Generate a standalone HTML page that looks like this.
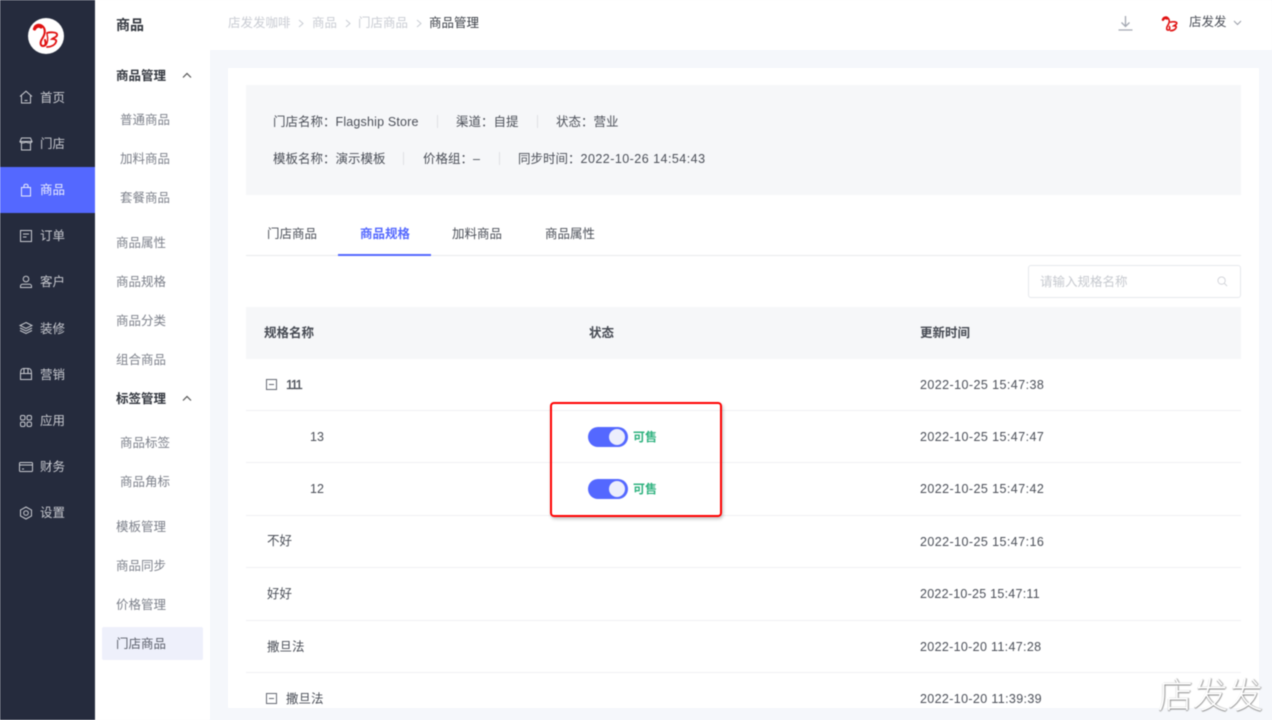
<!DOCTYPE html>
<html lang="zh"><head><meta charset="utf-8"><title>商品管理</title>
<style>
html,body{margin:0;padding:0;width:1272px;height:720px;overflow:hidden;background:#f5f7fb}
body{position:relative;font-family:"Liberation Sans","Noto Sans CJK SC",sans-serif;font-size:12.5px;color:#555a66}
#w{position:absolute;left:0;top:0;width:1272px;height:720px;filter:blur(.45px);overflow:hidden}
.a{position:absolute}
.t{position:absolute;white-space:nowrap;line-height:18px;transform:translateY(-9px)}
.n{color:#c9ccd3}
.s{color:#7d818b}
.b{color:#33373f;font-weight:700}
.r{color:#4b4f58}
.d{letter-spacing:.43px}
.l{position:absolute;left:246px;width:995px;height:1px;background:#eff0f3}
.v{position:absolute;width:1px;height:13px;background:#dfe1e5}
svg{position:absolute;overflow:visible}
.sw{position:absolute;left:588px;width:40px;height:20px;border-radius:10px;background:#5468ff}
.sw i{position:absolute;left:21px;top:2px;width:16px;height:16px;border-radius:50%;background:#eceefc}
</style></head><body><div id="w">

<div class="a" style="left:0;top:0;width:95px;height:720px;background:#252b3d"></div>
<div class="a" style="left:0;top:167px;width:95px;height:46px;background:#5468ff"></div>
<div class="a" style="left:95px;top:0;width:115px;height:720px;background:#fff"></div>
<div class="a" style="left:210px;top:0;width:1062px;height:50px;background:#fff"></div>
<div class="a" style="left:228px;top:68px;width:1031px;height:640px;background:#fff"></div>

<div class="a" style="left:28px;top:18px;width:36px;height:36px;border-radius:50%;background:#fff"></div>
<svg style="left:28px;top:18px" width="36" height="36" viewBox="0 0 36 36" fill="none" stroke="#e01010" stroke-width="1.800" stroke-linecap="round"><path d="M6 11C7 6 13 5 16 10c2 4 0 8-2 11-2 3-2 7 1 7 3 0 3-3 2-6" stroke-width="2"/><path d="M6.500 11C8 8 11 7.500 13 9" stroke-width="3.200"/><path d="M19 15c3-1 9-1 10 1 1 3-4 4-5 5 3 0 5 1 4 3-1 3-5 5-9 5"/><path d="M19 16c1 4 1 8-1 11" stroke-width="1.400"/></svg>

<svg style="left:19px;top:90px" width="14" height="14" viewBox="0 0 14 14" fill="none" stroke="#c8cad0" stroke-width="1"><path d="M1 6.500 7 1.200l6 5.300M2.500 5.500V13h9V5.500M5.500 10.500h3"/></svg>
<span class="t" style="left:40px;top:98px;color:#c8cad0">首页</span>
<svg style="left:19px;top:137px" width="14" height="14" viewBox="0 0 14 14" fill="none" stroke="#c8cad0" stroke-width="1"><path d="M2.500 1h9l1.500 3.500h-12zM1 4.500c0 1.500 4 2 6 .5 2 1.500 6 1 6-.5M2.500 6v7h9V6"/></svg>
<span class="t" style="left:40px;top:144px;color:#c8cad0">门店</span>
<svg style="left:19px;top:183px" width="14" height="14" viewBox="0 0 14 14" fill="none" stroke="#e8eafc" stroke-width="1"><path d="M2.500 4.500h9v8.500h-9zM5 4.500V2.500C5 .8 9 .8 9 2.500v2"/></svg>
<span class="t" style="left:40px;top:190px;color:#eef0ff">商品</span>
<svg style="left:19px;top:229px" width="14" height="14" viewBox="0 0 14 14" fill="none" stroke="#c8cad0" stroke-width="1"><path d="M1.500 1.500h11v11h-11zM4 5h6M4 8h3.500"/></svg>
<span class="t" style="left:40px;top:236px;color:#c8cad0">订单</span>
<svg style="left:19px;top:275px" width="14" height="14" viewBox="0 0 14 14" fill="none" stroke="#c8cad0" stroke-width="1"><circle cx="7" cy="4" r="2.800"/><path d="M1.500 12.500v-1.500c0-1 1-1.800 2-1.800h7c1 0 2 .8 2 1.800v1.500z"/></svg>
<span class="t" style="left:40px;top:282px;color:#c8cad0">客户</span>
<svg style="left:19px;top:321px" width="14" height="14" viewBox="0 0 14 14" fill="none" stroke="#c8cad0" stroke-width="1"><path d="M7 1.500 13 4.500 7 7.500 1 4.500zM1 7l6 3 6-3M1 9.500l6 3 6-3"/></svg>
<span class="t" style="left:40px;top:329px;color:#c8cad0">装修</span>
<svg style="left:19px;top:367px" width="14" height="14" viewBox="0 0 14 14" fill="none" stroke="#c8cad0" stroke-width="1"><path d="M1.500 6.500c0-3 1-5 3-5h5c2 0 3 2 3 5v6h-11zM1.500 6.500h11M5 1.500v5M9 1.500v5"/></svg>
<span class="t" style="left:40px;top:375px;color:#c8cad0">营销</span>
<svg style="left:19px;top:414px" width="14" height="14" viewBox="0 0 14 14" fill="none" stroke="#c8cad0" stroke-width="1"><rect x="1.500" y="1.500" width="4.500" height="4.500" rx="1.500"/><rect x="8" y="1.500" width="4.500" height="4.500" rx="1.500"/><rect x="1.500" y="8" width="4.500" height="4.500" rx="1.500"/><rect x="8" y="8" width="4.500" height="4.500" rx="1.500"/></svg>
<span class="t" style="left:40px;top:421px;color:#c8cad0">应用</span>
<svg style="left:19px;top:460px" width="14" height="14" viewBox="0 0 14 14" fill="none" stroke="#c8cad0" stroke-width="1"><rect x=".5" y="2.500" width="13" height="9" rx="1"/><path d="M.5 5h13M3 9h2"/></svg>
<span class="t" style="left:40px;top:467px;color:#c8cad0">财务</span>
<svg style="left:19px;top:506px" width="14" height="14" viewBox="0 0 14 14" fill="none" stroke="#c8cad0" stroke-width="1"><path d="M7 1 12.500 4v6L7 13 1.500 10V4z"/><circle cx="7" cy="7" r="2.300"/></svg>
<span class="t" style="left:40px;top:513px;color:#c8cad0">设置</span>

<span class="t" style="left:116px;top:25px;font-size:14px;font-weight:700;color:#33373f">商品</span>
<span class="t b" style="left:116px;top:76px">商品管理</span>
<svg style="left:182px;top:72px" width="10" height="7" viewBox="0 0 10 7" fill="none" stroke="#555" stroke-width="1.200"><path d="M1 5.500 5 1.500l4 4"/></svg>
<span class="t s" style="left:120px;top:120px">普通商品</span>
<span class="t s" style="left:120px;top:159px">加料商品</span>
<span class="t s" style="left:120px;top:198px">套餐商品</span>
<span class="t s" style="left:116px;top:243px">商品属性</span>
<span class="t s" style="left:116px;top:282px">商品规格</span>
<span class="t s" style="left:116px;top:321px">商品分类</span>
<span class="t s" style="left:116px;top:360px">组合商品</span>
<span class="t b" style="left:116px;top:399px">标签管理</span>
<svg style="left:182px;top:395px" width="10" height="7" viewBox="0 0 10 7" fill="none" stroke="#555" stroke-width="1.200"><path d="M1 5.500 5 1.500l4 4"/></svg>
<span class="t s" style="left:120px;top:443px">商品标签</span>
<span class="t s" style="left:120px;top:482px">商品角标</span>
<span class="t s" style="left:116px;top:527px">模板管理</span>
<span class="t s" style="left:116px;top:566px">商品同步</span>
<span class="t s" style="left:116px;top:605px">价格管理</span>
<div class="a" style="left:102px;top:627px;width:101px;height:33px;border-radius:2px;background:#eef0fb"></div>
<span class="t" style="left:116px;top:644px;color:#5a5e6a">门店商品</span>

<span class="t n" style="left:228px;top:23px">店发发咖啡</span>
<svg style="left:298px;top:19px" width="7" height="9" viewBox="0 0 7 9" fill="none" stroke="#c9ccd3" stroke-width="1"><path d="M1 1l4 3.500-4 3.500"/></svg>
<span class="t n" style="left:312px;top:23px">商品</span>
<svg style="left:345px;top:19px" width="7" height="9" viewBox="0 0 7 9" fill="none" stroke="#c9ccd3" stroke-width="1"><path d="M1 1l4 3.500-4 3.500"/></svg>
<span class="t n" style="left:358px;top:23px">门店商品</span>
<svg style="left:416px;top:19px" width="7" height="9" viewBox="0 0 7 9" fill="none" stroke="#c9ccd3" stroke-width="1"><path d="M1 1l4 3.500-4 3.500"/></svg>
<span class="t" style="left:429px;top:23px;color:#3c4048">商品管理</span>

<svg style="left:1118px;top:15px" width="15" height="16" viewBox="0 0 15 16" fill="none" stroke="#a4a8b2" stroke-width="1.300"><path d="M7.500 1v10M3.500 7.500l4 4 4-4M.5 15h14"/></svg>
<svg style="left:1159px;top:13px" width="22" height="22" viewBox="0 0 36 36" fill="none" stroke="#e01010" stroke-width="2.600" stroke-linecap="round"><path d="M6 11C7 6 13 5 16 10c2 4 0 8-2 11-2 3-2 7 1 7 3 0 3-3 2-6"/><path d="M6.500 11C8 8 11 7.500 13 9" stroke-width="4"/><path d="M19 15c3-1 9-1 10 1 1 3-4 4-5 5 3 0 5 1 4 3-1 3-5 5-9 5"/></svg>
<span class="t" style="left:1189px;top:22px;color:#4b4f58">店发发</span>
<svg style="left:1233px;top:20px" width="9" height="6" viewBox="0 0 9 6" fill="none" stroke="#9a9ea8" stroke-width="1"><path d="M1 1l3.500 3.500L8 1"/></svg>

<div class="a" style="left:246px;top:85px;width:995px;height:110px;background:#f6f7f9"></div>
<span class="t r" style="left:273px;top:122px">门店名称：<span style="letter-spacing:.18px">Flagship Store</span></span>
<div class="v" style="left:437px;top:115px"></div>
<span class="t r" style="left:456px;top:122px">渠道：自提</span>
<div class="v" style="left:537px;top:115px"></div>
<span class="t r" style="left:556px;top:122px">状态：营业</span>
<span class="t r" style="left:273px;top:159px">模板名称：演示模板</span>
<div class="v" style="left:403px;top:152px"></div>
<span class="t r" style="left:423px;top:159px">价格组：–</span>
<div class="v" style="left:499px;top:152px"></div>
<span class="t r" style="left:518px;top:159px">同步时间：<span class="d" style="letter-spacing:.47px">2022-10-26 14:54:43</span></span>

<span class="t r" style="left:267px;top:234px">门店商品</span>
<span class="t" style="left:360px;top:234px;color:#5468ff;font-weight:700">商品规格</span>
<span class="t r" style="left:452px;top:234px">加料商品</span>
<span class="t r" style="left:545px;top:234px">商品属性</span>
<div class="a" style="left:246px;top:255px;width:995px;height:1px;background:#e9eaed"></div>
<div class="a" style="left:338px;top:254px;width:93px;height:2px;background:#5468ff"></div>

<div class="a" style="left:1028px;top:265px;width:211px;height:31px;border:1px solid #e6e8ec;border-radius:3px;background:#fff"></div>
<span class="t" style="left:1040px;top:282px;color:#c6c9cf">请输入规格名称</span>
<svg style="left:1217px;top:276px" width="11" height="11" viewBox="0 0 12 12" fill="none" stroke="#d0d2d8" stroke-width="1"><circle cx="5" cy="5" r="4"/><path d="M8 8l3 3"/></svg>

<div class="a" style="left:246px;top:307px;width:995px;height:52px;background:#f6f7f9"></div>
<span class="t b" style="left:264px;top:333px;color:#454952">规格名称</span>
<span class="t b" style="left:589px;top:333px;color:#454952">状态</span>
<span class="t b" style="left:920px;top:333px;color:#454952">更新时间</span>

<div class="l" style="top:410px"></div>
<div class="l" style="top:462px"></div>
<div class="l" style="top:515px"></div>
<div class="l" style="top:567px"></div>
<div class="l" style="top:620px"></div>
<div class="l" style="top:672px"></div>

<svg style="left:266px;top:379px" width="11" height="11" viewBox="0 0 11 11" fill="none" stroke="#666a74" stroke-width="1"><path d="M.5.500h10v10H.5zM3 5.500h5"/></svg>
<span class="t r" style="left:286px;top:385px;letter-spacing:-1.500px;font-size:13px;-webkit-text-stroke:.3px #4b4f58">111</span>
<span class="t r d" style="left:920px;top:385px">2022-10-25 15:47:38</span>

<span class="t r" style="left:310px;top:437px">13</span>
<div class="sw" style="top:427px"><i></i></div>
<span class="t" style="left:633px;top:437px;color:#2fb27f;font-size:12px;font-weight:700">可售</span>
<span class="t r d" style="left:920px;top:437px">2022-10-25 15:47:47</span>

<span class="t r" style="left:310px;top:489px">12</span>
<div class="sw" style="top:479px"><i></i></div>
<span class="t" style="left:633px;top:489px;color:#2fb27f;font-size:12px;font-weight:700">可售</span>
<span class="t r d" style="left:920px;top:489px">2022-10-25 15:47:42</span>

<span class="t r" style="left:267px;top:541px">不好</span>
<span class="t r d" style="left:920px;top:542px">2022-10-25 15:47:16</span>
<span class="t r" style="left:267px;top:594px">好好</span>
<span class="t r d" style="left:920px;top:594px;letter-spacing:.25px">2022-10-25 15:47:11</span>
<span class="t r" style="left:267px;top:647px">撒旦法</span>
<span class="t r d" style="left:920px;top:647px;letter-spacing:.33px">2022-10-20 11:47:28</span>
<svg style="left:266px;top:693px" width="11" height="11" viewBox="0 0 11 11" fill="none" stroke="#666a74" stroke-width="1"><path d="M.5.500h10v10H.5zM3 5.500h5"/></svg>
<span class="t r" style="left:286px;top:699px">撒旦法</span>
<span class="t r d" style="left:920px;top:699px;letter-spacing:.36px">2022-10-20 11:39:39</span>

<div class="a" style="left:550px;top:402px;width:168px;height:111px;border:2.500px solid #ff0000;border-radius:4px;box-shadow:1px 2px 3px rgba(0,0,0,.25)"></div>

<span class="t" style="left:1158px;top:694px;font-size:35px;line-height:40px;transform:translateY(-20px);color:#fff;font-family:'Noto Sans CJK SC',sans-serif;font-weight:300;text-shadow:0 1px 1px #888,1px 0 1px #999">店发发</span>
</div></body></html>
